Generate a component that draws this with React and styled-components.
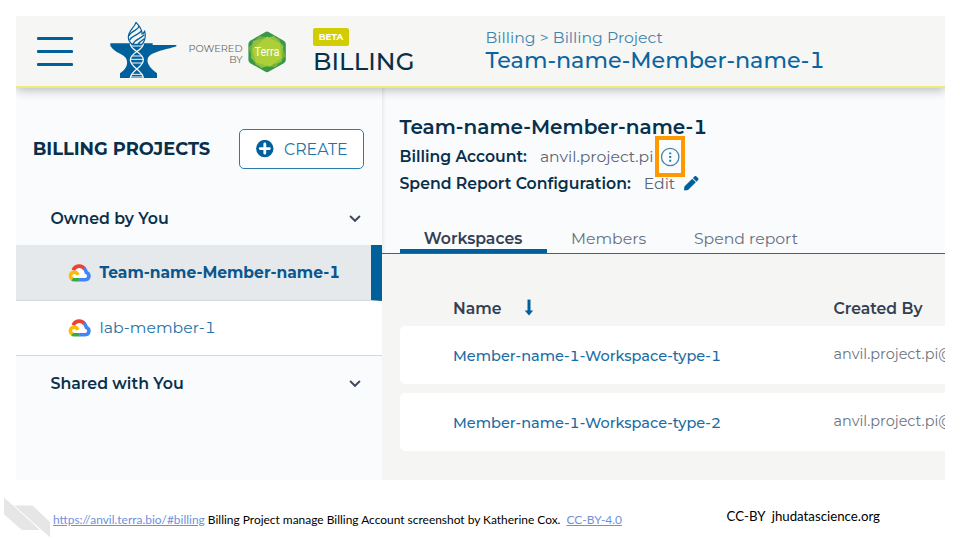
import React from 'react';
import styled, { createGlobalStyle } from 'styled-components';

const BLUE = '#00609b';
const NAVY = '#08304b';
const SLATE = '#333f52';
const PAPER = '#f6f6f4';
const FROST = '#fafbfd';

const GlobalStyle = createGlobalStyle`
  * { box-sizing: border-box; }
  body { margin: 0; background: #fff; font-family: Montserrat, Inter, sans-serif; font-variant-numeric: tabular-nums; }
`;

const Slide = styled.main`
  width: 960px;
  height: 540px;
  padding: 16px 15px 0 16px;
  display: flex;
  flex-direction: column;
  overflow: hidden;
  background: #fff;
`;

const AppWindow = styled.section`
  width: 929px;
  height: 464px;
  flex: none;
  display: flex;
  flex-direction: column;
  overflow: hidden;
`;

const Text = styled.span`
  display: block;
  white-space: nowrap;
  line-height: 20px;
  font-size: ${(p) => p.$size || 15.7}px;
  font-weight: ${(p) => p.$weight || 400};
  letter-spacing: ${(p) => p.$track || 0}px;
  color: ${(p) => p.$color || NAVY};
`;

/* ---- top bar ---- */

const TopBar = styled.header`
  height: 72px;
  flex: none;
  display: flex;
  align-items: flex-start;
  background: ${PAPER};
  border-bottom: 2px solid #efe97a;
  box-shadow: 0 2px 10px rgba(0, 0, 0, 0.27);
  position: relative;
  z-index: 1;
`;

const MenuButton = styled.button`
  width: 36px;
  height: 29px;
  margin: 21px 0 0 21px;
  padding: 0;
  border: 0;
  background: none;
  display: flex;
  flex-direction: column;
  justify-content: space-between;
`;

const MenuLine = styled.span`
  height: 3px;
  border-radius: 1px;
  background: ${BLUE};
`;

const AnvilMark = styled.svg`
  width: 67px;
  height: 57px;
  margin: 6px 0 0 37px;
  flex: none;
`;

const PoweredBy = styled.div`
  width: 65.5px;
  margin-top: 27px;
  display: flex;
  flex-direction: column;
  align-items: flex-end;
  font-size: 9.8px;
  line-height: 11px;
  color: #66686b;
`;

const TerraMark = styled.svg`
  width: 38px;
  height: 42px;
  margin: 14.5px 0 0 5.5px;
  flex: none;
`;

const SectionName = styled.div`
  width: 146px;
  margin: 12px 0 0 27px;
  display: flex;
  flex-direction: column;
  align-items: flex-start;
`;

const BetaTag = styled.span`
  width: 36px;
  height: 18px;
  margin-bottom: 5px;
  border-radius: 2px;
  background: #d2cd02;
  color: #fff;
  font-size: 8.9px;
  font-weight: 700;
  line-height: 18.5px;
  text-align: center;
`;

const Breadcrumb = styled.div`
  margin: 12px 0 0 26.5px;
  display: flex;
  flex-direction: column;
  gap: 1.5px;
`;

/* ---- body ---- */

const Body = styled.div`
  flex: 1;
  display: flex;
  min-height: 0;
`;

const Sidebar = styled.nav`
  width: 366px;
  flex: none;
  background: ${FROST};
`;

const SidebarHead = styled.div`
  height: 103px;
  padding: 41px 18px 22px 16.7px;
  display: flex;
  justify-content: space-between;
  align-items: center;
`;

const CreateButton = styled.button`
  width: 125px;
  height: 40px;
  padding: 0 0 0 15.5px;
  display: flex;
  align-items: center;
  gap: 10.5px;
  font-family: inherit;
  background: #fff;
  border: 1px solid #2c7bad;
  border-radius: 5px;
`;

const CreateLabel = styled(Text)`
  padding-top: 1px;
`;

const GroupRow = styled.div`
  height: 54px;
  padding: 1px 20px 0 34.5px;
  display: flex;
  align-items: center;
  justify-content: space-between;
`;

const ProjectRow = styled.div`
  height: ${(p) => (p.$active ? 56 : 55)}px;
  padding-left: 52px;
  display: flex;
  align-items: center;
  gap: 8.5px;
  background: ${(p) => (p.$active ? '#e5e9ec' : '#fff')};
  border-bottom: 1px solid #d3d9de;
  border-right: ${(p) => (p.$active ? `11px solid ${BLUE}` : 0)};
`;

const CloudIcon = styled.svg`
  width: 23px;
  height: 18px;
  flex: none;
`;

const Content = styled.section`
  flex: 1;
  min-width: 0;
  display: flex;
  flex-direction: column;
  background: #f5f5f3;
`;

const Summary = styled.div`
  height: 166px;
  flex: none;
  padding: 28.5px 0 0 17.5px;
  display: flex;
  flex-direction: column;
  background: linear-gradient(90deg, #e9ebee 0, ${FROST} 4px);
  border-bottom: 1px solid #1f6f9f;
`;

const Details = styled.div`
  margin-top: 6.5px;
`;

const DetailRow = styled.div`
  height: 27px;
  display: flex;
  align-items: center;
`;

const Value = styled(Text)`
  margin-left: 13px;
`;

const OptionsButton = styled.span`
  position: relative;
  width: 20px;
  height: 20px;
  margin-left: 7px;
`;

const OptionsHighlight = styled.span`
  position: absolute;
  left: -5px;
  top: -10.5px;
  width: 30px;
  height: 41px;
  border: 4px solid #ff9900;
`;

const EditIcon = styled.svg`
  width: 14.5px;
  height: 14.5px;
  margin-left: 9px;
`;

const Tabs = styled.div`
  margin-top: auto;
  height: 27px;
  display: flex;
`;

const Tab = styled.div`
  width: ${(p) => p.$width}px;
  display: flex;
  justify-content: center;
  padding-top: 2.5px;
  border-bottom: 4.5px solid ${(p) => (p.$active ? BLUE : 'transparent')};
`;

const TableHead = styled.div`
  height: 72px;
  padding: 44.5px 0 0 71px;
  display: flex;
  flex: none;
`;

const NameHead = styled.div`
  width: 380.5px;
  flex: none;
  display: flex;
  gap: 22px;
`;

const SortArrow = styled.svg`
  width: 10px;
  height: 18px;
`;

const TableRow = styled.div`
  height: 58px;
  flex: none;
  margin: 0 0 9px 17.5px;
  padding-left: 53.5px;
  display: flex;
  align-items: center;
  background: #fff;
  border-radius: 5px 0 0 5px;
`;

const NameCell = styled.div`
  width: 380.5px;
  flex: none;
  padding-top: 1.5px;
`;

const CreatorCell = styled.div`
  width: 112px;
  overflow: hidden;
  padding-bottom: 2.5px;
`;

/* ---- footer ---- */

const Footer = styled.footer`
  flex: 1;
  display: flex;
  align-items: flex-start;
  margin-left: -16px;
  padding: 16.5px 0 0 4.3px;
  font-family: Lato, sans-serif;
  font-variant-numeric: normal;
  color: #000;
`;

const RibbonMark = styled.svg`
  width: 46px;
  height: 42px;
  flex: none;
`;

const Credit = styled.p`
  margin: 14px 0 0 2.7px;
  width: 673.5px;
  font-size: 11.94px;
  line-height: 18px;
  white-space: pre;
`;

const Link = styled.a`
  color: #6f8fdc;
  text-decoration: underline;
`;

const License = styled.p`
  margin: 10.5px 0 0;
  font-size: 13.25px;
  line-height: 18px;
  white-space: pre;
`;

const Anvil = () => (
  <AnvilMark viewBox="330 66 201 171">
    <path
      fill={BLUE}
      d="M331 130H458V135H529V139C498 150 449 155 443 177C439 193 456 208 471 220V234H360V220C377 208 386 193 379 177C373 161 344 160 331 137Z"
    />
    <path
      d="M408 67C404 83 384 92 385 113C386 123 392 130 398 133H425C434 124 438 110 434 94C431 99 429 101 426 102C427 87 418 78 408 67Z"
      fill={PAPER}
      stroke={BLUE}
      strokeWidth="3.5"
    />
    <g fill="none" stroke={BLUE} strokeWidth="4">
      <path d="M417 78C416 91 389 94 387 108" />
      <path d="M425 91C420 105 392 106 389 121" />
      <path d="M433 104C423 117 406 116 399 132" />
      <path d="M434 116C425 122 418 125 414 133" />
    </g>
    <g fill="none" stroke={PAPER} strokeWidth="4">
      <path d="M391 131C391 151 430 157 430 180S391 211 391 235" />
      <path d="M430 131C430 151 391 157 391 180S430 211 430 235" />
      <path d="M393 138H428M397 168H424M391 178H430M393 189H428M396 223H425M392 231H429" strokeWidth="3" />
    </g>
  </AnvilMark>
);

const Terra = () => (
  <TerraMark viewBox="0 0 38 42">
    <path fill="#39974a" d="M17 1.2Q19 0 21 1.2L35.8 9.8Q37.8 11 37.8 13V29Q37.8 31 35.8 32.2L21 40.6Q19 41.7 17 40.6L2.2 32.2Q.4 31 .4 29V13Q.4 11 2.2 9.8Z" />
    <path fill="#74b03f" d="M11 5.2L31 7.5L37.5 25L27.5 36.2L8 34.5L.6 17Z" />
    <path fill="#8fc33b" d="M5 10L26 5L35.5 15L33.5 31L13 37L3 27Z" />
    <path fill="#add038" d="M19 5.5L32 12.5L33.5 27L22 35.5L8 31.5L4.5 18Z" />
    <text x="19" y="24.8" textAnchor="middle" textLength="25" lengthAdjust="spacingAndGlyphs" fontFamily="Roboto, sans-serif" fontSize="12.5" fill="#fff">
      Terra
    </text>
  </TerraMark>
);

const Cloud = () => (
  <CloudIcon viewBox="0 0 23 18" fill="none" strokeWidth="3.6">
    <path fill="#fff" d="M5 7L9 3H14L18 8L19 14L6 15L3 11Z" />
    <path stroke="#ea4335" d="M5.2 6.2C7.3 1.2 13.7.8 16.6 4.9" />
    <path stroke="#4285f4" d="M15.8 4.2C18 6 17.8 7.2 18.3 8.3C22.4 10 21.4 15.6 17.3 15.7H11.6" />
    <path stroke="#34a853" d="M11.8 15.7H6.2C5.2 15.7 4.5 15.4 3.9 15" />
    <path stroke="#fbbc05" d="M4.4 15.2C1.1 13 2.3 8.2 6.2 8.2C8.3 8.2 9.3 9.3 9.9 10.8" />
  </CloudIcon>
);

const Chevron = () => (
  <svg width="14" height="10" viewBox="0 0 14 10" fill="none">
    <path d="M2.6 2.5L7 6.800L11.4 2.5" stroke="#3d4a5c" strokeWidth="1.900" strokeLinecap="round" />
  </svg>
);

const PlusCircle = () => (
  <svg width="18" height="18" viewBox="0 0 18 18">
    <circle cx="8.8" cy="8.600" r="8.700" fill={BLUE} />
    <path d="M8.8 4V13.2M4.2 8.6H13.4" stroke="#fff" strokeWidth="2.8" strokeLinecap="round" />
  </svg>
);

const Options = () => (
  <OptionsButton>
    <svg width="20" height="20" viewBox="0 0 20 20" fill="none">
      <circle cx="10.2" cy="10" r="8.7" stroke="#3f84b1" strokeWidth="1.3" />
      <path d="M10.2 5.4v1.900M10.2 9.100v1.900M10.2 12.800v1.900" stroke="#2a76a9" strokeWidth="2" />
    </svg>
    <OptionsHighlight />
  </OptionsButton>
);

const Pencil = () => (
  <EditIcon viewBox="0 0 512 512" fill={BLUE}>
    <path d="M290.7 93.2l128 128L142 498 27.9 510.6C12.6 512.3-.3 499.4 1.4 484.1L14 370zM497.9 74.2l-60.1-60.1c-18.8-18.8-49.2-18.8-67.9 0l-56.6 56.6 128 128 56.6-56.6c18.7-18.8 18.7-49.2 0-67.9z" />
  </EditIcon>
);

const workspaces = ['Member-name-1-Workspace-type-1', 'Member-name-1-Workspace-type-2'];

export default function App() {
  return (
    <Slide>
      <GlobalStyle />
      <AppWindow>
        <TopBar>
          <MenuButton aria-label="Menu">
            <MenuLine />
            <MenuLine />
            <MenuLine />
          </MenuButton>
          <Anvil />
          <PoweredBy>
            <span>POWERED</span>
            <span>BY</span>
          </PoweredBy>
          <Terra />
          <SectionName>
            <BetaTag>BETA</BetaTag>
            <Text $size={24.3} $weight={500} $track={0.1}>BILLING</Text>
          </SectionName>
          <Breadcrumb>
            <Text $color="#3f84b1">Billing &gt; Billing Project</Text>
            <Text $size={22.25} $weight={500} $color="#0a659f">Team-name-Member-name-1</Text>
          </Breadcrumb>
        </TopBar>
        <Body>
          <Sidebar>
            <SidebarHead>
              <Text $size={17.85} $weight={700}>BILLING PROJECTS</Text>
              <CreateButton>
                <PlusCircle />
                <CreateLabel $size={15.8} $color="#2273a8">CREATE</CreateLabel>
              </CreateButton>
            </SidebarHead>
            <GroupRow>
              <Text $size={15.8} $weight={600}>Owned by You</Text>
              <Chevron />
            </GroupRow>
            <ProjectRow $active>
              <Cloud />
              <Text $size={15.55} $weight={700} $color="#0b568c">Team-name-Member-name-1</Text>
            </ProjectRow>
            <ProjectRow>
              <Cloud />
              <Text $color="#2273a8">lab-member-1</Text>
            </ProjectRow>
            <GroupRow>
              <Text $size={15.8} $weight={600}>Shared with You</Text>
              <Chevron />
            </GroupRow>
          </Sidebar>
          <Content>
            <Summary>
              <Text $size={20.05} $weight={600}>Team-name-Member-name-1</Text>
              <Details>
                <DetailRow>
                  <Text $size={15.65} $weight={600}>Billing Account:</Text>
                  <Value $size={15.65} $color="#5a6677">anvil.project.pi</Value>
                  <Options />
                </DetailRow>
                <DetailRow>
                  <Text $weight={600}>Spend Report Configuration:</Text>
                  <Value $color="#5a6677">Edit</Value>
                  <Pencil />
                </DetailRow>
              </Details>
              <Tabs>
                <Tab $active $width={147}>
                  <Text $weight={600} $color={SLATE}>Workspaces</Text>
                </Tab>
                <Tab $width={124}>
                  <Text $color="#667080">Members</Text>
                </Tab>
                <Tab $width={151}>
                  <Text $color="#667080">Spend report</Text>
                </Tab>
              </Tabs>
            </Summary>
            <TableHead>
              <NameHead>
                <Text $weight={600} $color={SLATE}>Name</Text>
                <SortArrow viewBox="0 0 10 18">
                  <path d="M5 .6V14" stroke={BLUE} strokeWidth="3" />
                  <path d="M.8 11.4H9.2L5 16.4Z" fill={BLUE} />
                </SortArrow>
              </NameHead>
              <Text $weight={600} $color={SLATE}>Created By</Text>
            </TableHead>
            {workspaces.map((name) => (
              <TableRow key={name}>
                <NameCell>
                  <Text $size={14.5} $weight={500} $color="#1a6ca3">{name}</Text>
                </NameCell>
                <CreatorCell>
                  <Text $size={14.45} $color="#6c7583">anvil.project.pi@</Text>
                </CreatorCell>
              </TableRow>
            ))}
          </Content>
        </Body>
      </AppWindow>
      <Footer>
        <RibbonMark viewBox="0 0 46 42">
          <path d="M0 0L46 40.5V25L28.5 8.4H9.5L0 0V17.5L18 33H36" fill="#e6e6e6" />
          <path d="M0 0L46 41" stroke="#fff" strokeWidth="1" />
        </RibbonMark>
        <Credit>
          <Link>https://anvil.terra.bio/#billing</Link>
          {' Billing Project manage Billing Account screenshot by Katherine Cox.  '}
          <Link>CC-BY-4.0</Link>
        </Credit>
        <License>{'CC-BY  jhudatascience.org'}</License>
      </Footer>
    </Slide>
  );
}
